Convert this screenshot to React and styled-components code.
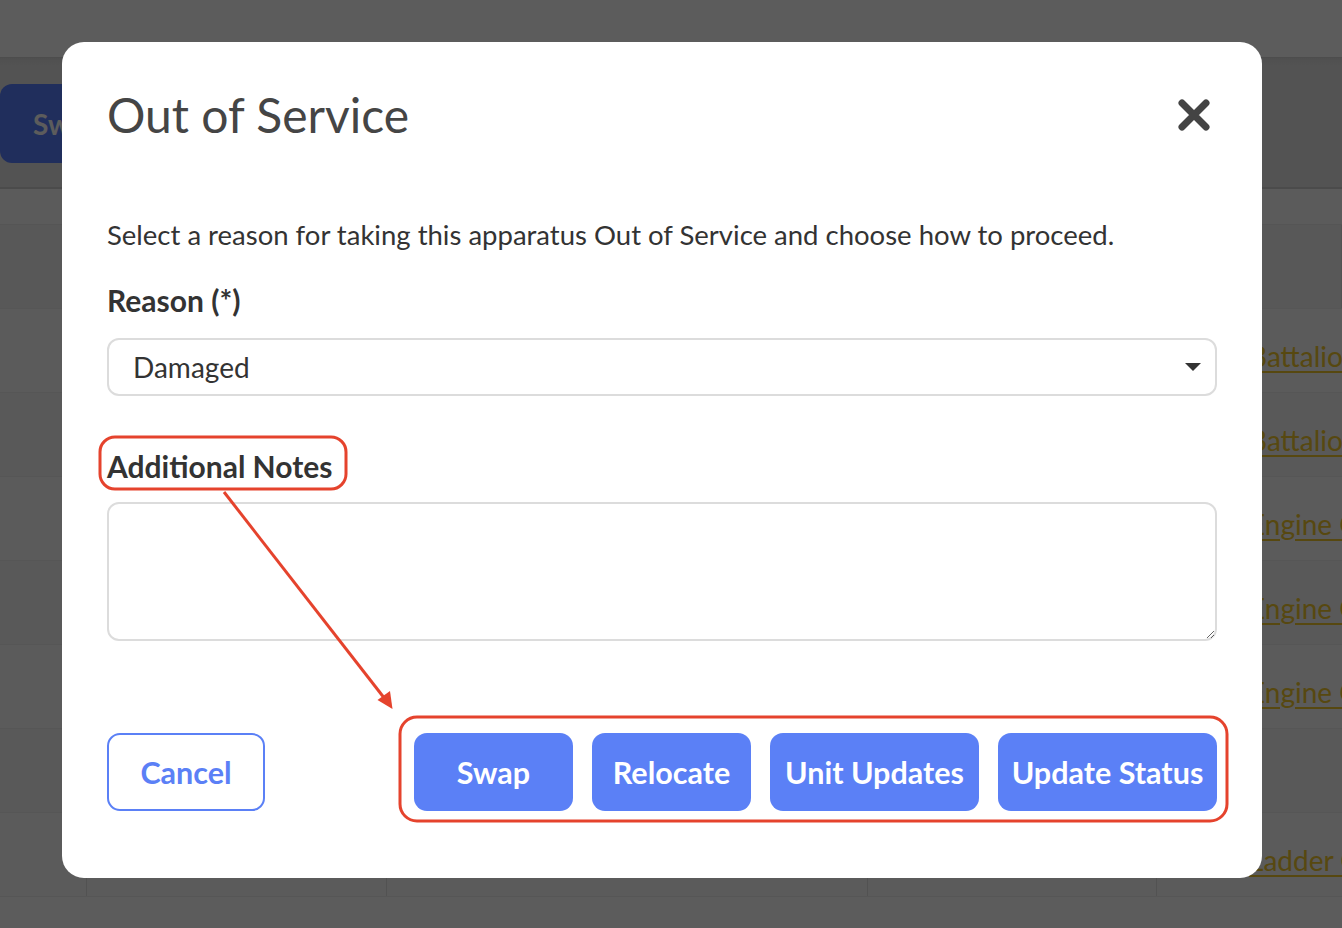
import styled, { createGlobalStyle } from "styled-components";

const GlobalStyle = createGlobalStyle`
  html, body {
    margin: 0;
    padding: 0;
    background: #ffffff;
    font-family: Lato, "Open Sans", "Liberation Sans", sans-serif;
    overflow: hidden;
  }
`;

const units = [
  "Battalion Chief 1",
  "Battalion Chief 2",
  "Engine Company 1",
  "Engine Company 2",
  "Engine Company 3",
  "",
  "Ladder Company 1",
];

function App() {
  return (
    <>
      <GlobalStyle />
      <Page>
        <TopBar />
        <Toolbar>
          <ToolButton>Swap</ToolButton>
        </Toolbar>
        <SubBar />
        <Table>
          <HeadRow>
            <Cell />
            <Cell />
            <Cell />
            <Cell />
            <Cell />
          </HeadRow>
          {units.map((name, i) => (
            <Row key={i} $odd={i % 2 === 1}>
              <Cell />
              <Cell />
              <Cell />
              <Cell />
              <LinkCell>{name && <UnitLink href="#">{name}</UnitLink>}</LinkCell>
            </Row>
          ))}
        </Table>
      </Page>

      <Overlay>
        <Modal>
          <Header>
            <Title>Out of Service</Title>
            <CloseButton aria-label="Close">
              <svg width="32" height="32" viewBox="0 0 32 32">
                <path
                  d="M4 4 L28 28 M28 4 L4 28"
                  stroke="#444"
                  strokeWidth="7"
                  strokeLinecap="round"
                />
              </svg>
            </CloseButton>
          </Header>

          <Intro>
            Select a reason for taking this apparatus Out of Service and choose
            how to proceed.
          </Intro>

          <Label>Reason (*)</Label>
          <SelectWrap>
            <Select defaultValue="damaged">
              <option value="damaged">Damaged</option>
              <option value="maintenance">Maintenance</option>
              <option value="staffing">Staffing</option>
            </Select>
            <Caret width="16" height="8" viewBox="0 0 16 8">
              <path d="M0 0 L16 0 L8 8 Z" fill="#333" />
            </Caret>
          </SelectWrap>

          <Label $gap={50}>Additional Notes</Label>
          <Notes />

          <Footer>
            <OutlineButton>Cancel</OutlineButton>
            <ActionGroup>
              <ActionButton $w={159}>Swap</ActionButton>
              <ActionButton $w={159}>Relocate</ActionButton>
              <ActionButton $w={209}>Unit Updates</ActionButton>
              <ActionButton $w={219}>Update Status</ActionButton>
            </ActionGroup>
          </Footer>
        </Modal>
      </Overlay>

      {/* red callouts drawn on top */}
      <Callouts width="1342" height="928" viewBox="0 0 1342 928">
        <g fill="none" stroke="#e5432d" strokeWidth="3">
          <rect x="100" y="437" width="246" height="52" rx="15" />
          <rect x="400" y="717" width="827" height="104" rx="17" />
          <line x1="224" y1="492" x2="385" y2="699" />
        </g>
        <path d="M392.5 709 L377.5 700 L390 691 Z" fill="#e5432d" />
      </Callouts>
    </>
  );
}

/* ---------- page behind the dialog ---------- */

const Page = styled.div`
  width: 1342px;
  height: 928px;
  display: flex;
  flex-direction: column;
`;

const TopBar = styled.div`
  height: 57px;
  background: #ffffff;
  border-bottom: 1px solid #d6d6d6;
`;

const Toolbar = styled.div`
  height: 131px;
  background: linear-gradient(#dcdcdc, #e6e6e6 8px, #e6e6e6);
  border-bottom: 2px solid #cfcfcf;
  display: flex;
  align-items: center;
  padding-top: 2px;
  box-sizing: border-box;
`;

const ToolButton = styled.button`
  width: 170px;
  height: 79px;
  margin-left: 0;
  border: none;
  border-radius: 12px;
  background: #5a7fff;
  color: #ffffff;
  font-family: Lato, sans-serif;
  font-weight: 700;
  font-size: 28px;
  text-align: left;
  padding-left: 33px;
`;

const SubBar = styled.div`
  height: 36px;
  box-sizing: border-box;
  background: #fbfbfb;
  border-bottom: 1px solid #ececec;
`;

const Table = styled.div`
  display: flex;
  flex-direction: column;
`;

const Row = styled.div`
  display: grid;
  grid-template-columns: 87px 300px 481px 289px 1fr;
  height: 84px;
  flex-shrink: 0;
  box-sizing: border-box;
  background: ${(p) => (p.$odd ? "#f6f6f6" : "#fbfbfb")};
  border-bottom: 1px solid #efefef;
`;

const HeadRow = styled(Row)`
  background: #f3f3f3;
`;

const Cell = styled.div`
  border-right: 1px solid #e2e2e2;
`;

const LinkCell = styled.div`
  display: flex;
  align-items: center;
  padding-left: 92px;
  padding-top: 10px;
  white-space: nowrap;
  overflow: hidden;
`;

const UnitLink = styled.a`
  color: #f2c82e;
  font-size: 28px;
  text-decoration: underline;
  text-underline-offset: 4px;
`;

/* ---------- dialog ---------- */

const Overlay = styled.div`
  position: fixed;
  inset: 0;
  background: rgba(0, 0, 0, 0.64);
  display: flex;
  align-items: flex-start;
  padding: 42px 0 0 62px;
`;

const Modal = styled.div`
  width: 1200px;
  height: 836px;
  box-sizing: border-box;
  background: #ffffff;
  border-radius: 22px;
  padding: 42px 45px 0 45px;
  display: flex;
  flex-direction: column;
`;

const Header = styled.div`
  height: 62px;
  display: flex;
  align-items: center;
  justify-content: space-between;
`;

const Title = styled.h2`
  margin: 0;
  font-size: 48px;
  line-height: 1;
  font-weight: 400;
  color: #454545;
`;

const CloseButton = styled.button`
  border: none;
  background: none;
  padding: 0;
  margin-right: 7px;
  display: flex;
  cursor: pointer;
`;

const Intro = styled.p`
  margin: 69px 0 0;
  font-size: 27.5px;
  line-height: 40px;
  color: #333333;
`;

const Label = styled.label`
  display: block;
  margin-top: ${(p) => p.$gap ?? 25}px;
  font-size: 30px;
  line-height: 40px;
  font-weight: 700;
  color: #333333;
`;

const SelectWrap = styled.div`
  position: relative;
  margin-top: 18px;
`;

const Select = styled.select`
  width: 100%;
  height: 58px;
  box-sizing: border-box;
  appearance: none;
  border: 2px solid #dcdcdc;
  border-radius: 12px;
  background: #ffffff;
  padding: 0 24px;
  font-family: Lato, sans-serif;
  font-size: 28px;
  color: #333333;
`;

const Caret = styled.svg`
  position: absolute;
  right: 16px;
  top: 25px;
  pointer-events: none;
`;

const Notes = styled.textarea`
  margin-top: 16px;
  width: 100%;
  height: 139px;
  box-sizing: border-box;
  border: 2px solid #dcdcdc;
  border-radius: 12px;
  resize: vertical;
  padding: 12px 24px;
  font-family: Lato, sans-serif;
  font-size: 28px;
  outline: none;
`;

const Footer = styled.div`
  margin-top: 92px;
  display: flex;
  justify-content: space-between;
  align-items: center;
`;

const ActionGroup = styled.div`
  display: flex;
  gap: 19px;
`;

const BaseButton = styled.button`
  height: 78px;
  box-sizing: border-box;
  border-radius: 13px;
  font-family: Lato, sans-serif;
  font-weight: 700;
  font-size: 30.5px;
  padding: 0;
  cursor: pointer;
`;

const OutlineButton = styled(BaseButton)`
  width: 158px;
  background: #ffffff;
  border: 2px solid #5b80f6;
  color: #5b80f6;
`;

const ActionButton = styled(BaseButton)`
  width: ${(p) => p.$w}px;
  background: #5b80f6;
  border: none;
  color: #ffffff;
`;

const Callouts = styled.svg`
  position: fixed;
  left: 0;
  top: 0;
  pointer-events: none;
`;

export default App;
